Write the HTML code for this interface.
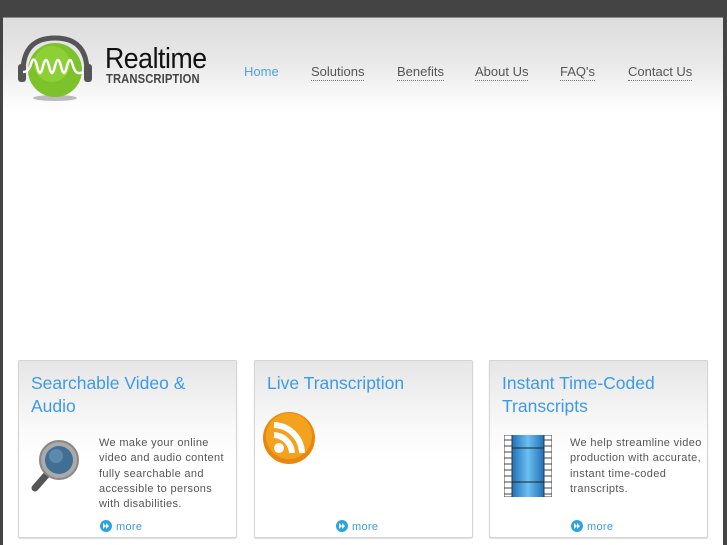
<!DOCTYPE html>
<html><head><meta charset="utf-8"><style>
*{margin:0;padding:0;box-sizing:border-box}
html,body{width:727px;height:545px;overflow:hidden;background:#444;font-family:"Liberation Sans",sans-serif}
#page{position:absolute;left:3px;top:17px;width:720px;height:528px;background:#fff;border-top:1px solid #8a8a8a}
#hdr{position:absolute;left:0;top:0;width:720px;height:95px;background:linear-gradient(#dcdcdc,#eaeaea 50%,#f8f8f8 80%,#fff)}
.logo{position:absolute;left:14px;top:14px}
.rt{position:absolute;left:102px;top:25px;font-size:29px;color:#111;letter-spacing:-0.5px;transform:scaleX(.92);transform-origin:left}
.tr{position:absolute;left:103px;top:54px;font-size:12.5px;font-weight:bold;color:#444;letter-spacing:0.1px;transform:scaleX(.9);transform-origin:left}
.nav a{position:absolute;top:46px;font-size:13px;color:#555;text-decoration:none;border-bottom:1px dotted #777;padding-bottom:1px}
.nav a.h{color:#4aa3e8;border:none}
.box{position:absolute;top:342px;width:219px;height:178px;border:1px solid #d4d4d4;border-radius:2px;background:linear-gradient(#e6e6e6,#fafafa 70px,#fff 100px);box-shadow:0 1px 1px #ddd}
.box h2{position:absolute;left:12px;top:11px;font-weight:normal;font-size:17.5px;line-height:23px;color:#3d9ae8}
.box p{position:absolute;left:80px;top:75px;font-size:11px;line-height:15.3px;color:#555;width:128px;letter-spacing:.35px}
.more{position:absolute;top:159px;font-size:11px;color:#3d9ae8;letter-spacing:.3px}
.more i{display:inline-block;width:12px;height:12px;border-radius:50%;background:#2ba3dc;vertical-align:-2px;margin-right:4px;position:relative}
.more i:before,.more i:after{content:"";position:absolute;top:3px;border-left:3px solid #fff;border-top:3px solid transparent;border-bottom:3px solid transparent}
.more i:before{left:3px}.more i:after{left:6px}
</style></head><body>
<div id="page">
<div id="hdr">
<svg class="logo" width="80" height="70" viewBox="0 0 80 70">
<ellipse cx="38" cy="66" rx="22" ry="3" fill="#bbb"/>
<path d="M6 40 Q6 6 38 6 Q70 6 70 40" fill="none" stroke="#555" stroke-width="5"/>
<rect x="1" y="32" width="8" height="18" rx="3" fill="#555"/>
<rect x="67" y="32" width="8" height="18" rx="3" fill="#555"/>
<circle cx="38" cy="38" r="27" fill="#7cc22a"/>
<circle cx="35" cy="32" r="18" fill="#9ad840" opacity=".6"/>
<path d="M6 40 Q12 40 14 32 Q17 22 20 34 Q23 48 26 34 Q29 22 32 34 Q35 48 38 34 Q41 22 44 34 Q47 48 50 34 Q53 22 56 34 Q59 44 66 40" fill="none" stroke="#fff" stroke-width="2.5"/>
</svg>
<div class="rt">Realtime</div>
<div class="tr">TRANSCRIPTION</div>
<div class="nav">
<a class="h" style="left:241px">Home</a>
<a style="left:308px">Solutions</a>
<a style="left:394px">Benefits</a>
<a style="left:472px">About Us</a>
<a style="left:557px">FAQ's</a>
<a style="left:625px">Contact Us</a>
</div>
</div>

<div class="box" style="left:15px">
<h2>Searchable Video &amp;<br>Audio</h2>
<svg style="position:absolute;left:10px;top:77px" width="56" height="56" viewBox="0 0 56 56">
<line x1="20" y1="34" x2="6" y2="50" stroke="#555" stroke-width="7" stroke-linecap="round"/>
<circle cx="30" cy="22" r="19" fill="#aaa" stroke="#888" stroke-width="2"/>
<circle cx="30" cy="22" r="14" fill="#3f6f95"/>
<circle cx="27" cy="18" r="7" fill="#6f9bc0" opacity=".6"/>
</svg>
<p>We make your online video and audio content fully searchable and accessible to persons with disabilities.</p>
<div class="more" style="left:81px"><i></i>more</div>
</div>

<div class="box" style="left:251px">
<h2>Live Transcription</h2>
<svg style="position:absolute;left:7px;top:50px" width="55" height="55" viewBox="0 0 55 55">
<circle cx="27" cy="27" r="26" fill="#e8870f"/>
<circle cx="27" cy="25" r="23" fill="#f4a21e"/>
<circle cx="17" cy="37" r="5" fill="#fff"/>
<path d="M12 24 A19 19 0 0 1 30 42" fill="none" stroke="#fff" stroke-width="6"/>
<path d="M12 14 A29 29 0 0 1 40 42" fill="none" stroke="#fff" stroke-width="6"/>
</svg>
<div class="more" style="left:81px"><i></i>more</div>
</div>

<div class="box" style="left:486px">
<h2>Instant Time-Coded<br>Transcripts</h2>
<svg style="position:absolute;left:14px;top:74px" width="48" height="62" viewBox="0 0 48 62">
<defs><linearGradient id="g" x1="0" x2="1"><stop offset="0" stop-color="#1f70b8"/><stop offset=".5" stop-color="#6cc0f0"/><stop offset="1" stop-color="#1f70b8"/></linearGradient></defs>
<rect x="0" y="0" width="48" height="62" fill="#fff" stroke="#444" stroke-width="1"/>
<rect x="8" y="0" width="32" height="62" fill="url(#g)"/>
<line x1="8" y1="0" x2="8" y2="62" stroke="#333"/><line x1="40" y1="0" x2="40" y2="62" stroke="#333"/>
<line x1="8" y1="13" x2="40" y2="13" stroke="#222"/><line x1="8" y1="47" x2="40" y2="47" stroke="#222"/>
<path d="M0 5H8M0 11H8M0 17H8M0 23H8M0 29H8M0 35H8M0 41H8M0 47H8M0 53H8M0 59H8M40 5H48M40 11H48M40 17H48M40 23H48M40 29H48M40 35H48M40 41H48M40 47H48M40 53H48M40 59H48" stroke="#444"/>
</svg>
<p style="width:135px">We help streamline video production with accurate, instant time-coded transcripts.</p>
<div class="more" style="left:81px"><i></i>more</div>
</div>
</div>
</body></html>
